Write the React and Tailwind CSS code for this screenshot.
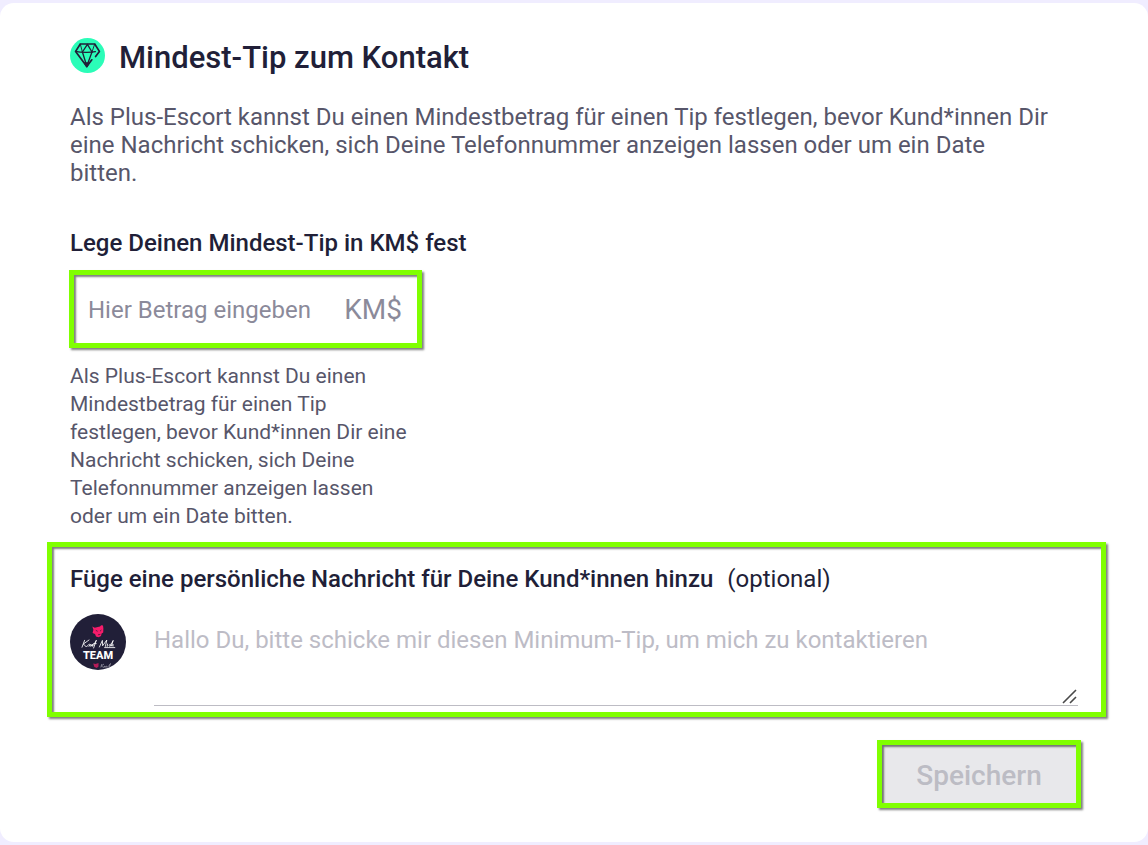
import React from "react";

const highlight =
  "border-[5px] border-[#80ff00] shadow-[2px_2px_2px_0_rgba(0,0,0,0.5),inset_2px_2px_2px_0_rgba(0,0,0,0.5)]";

function DiamondBadge() {
  return (
    <svg viewBox="0 0 35 35" className="-mt-[5px] size-[35px] shrink-0" aria-hidden="true">
      <circle cx="17.5" cy="17.5" r="17.5" fill="#2bfdb8" />
      <g fill="none" stroke="#211f38" strokeWidth="1.7" strokeLinecap="round" strokeLinejoin="round">
        <path d="M25.6 18.6 29.4 13.4 24.7 6H10.3L5.6 13.4 16.8 28.6 21.8 21.8" />
        <path d="M5.6 13.4C11 14.6 21 14.6 25.4 13.6" strokeWidth="1.4" />
        <path d="M12.4 14 16.8 28 22 14" strokeWidth="1.3" />
        <path d="M12.4 14 17.4 6.4 22 14" strokeWidth="1.3" />
        <path d="M10.3 6 12.4 14M24.7 6 22 14" strokeWidth="0.9" />
        <path d="M14.8 25H18.8L16.8 28.6Z" fill="#211f38" />
      </g>
    </svg>
  );
}

function TeamAvatar() {
  return (
    <svg viewBox="0 0 56 56" className="size-14 shrink-0" role="img" aria-label="Kauf Mich Team">
      <defs>
        <clipPath id="avatar-clip">
          <circle cx="28" cy="28" r="28" />
        </clipPath>
      </defs>
      <g clipPath="url(#avatar-clip)">
        <rect width="56" height="56" fill="#211f38" />
        <path
          d="M22.3 12.6 24.8 13.8 27.8 13 30 12.6 31.2 11.2 33 11.6 33.4 14.5 33.2 18.5 31.6 19.5 31 22 28.5 23.2 26 22.4 25 20 22.6 19 23.4 15.8Z"
          fill="#f71c6b"
        />
        <path d="M25.8 16.3 27.6 17.3M31.4 16 30 17.2M28 20.8 30.4 20.4" stroke="#211f38" strokeWidth="0.7" />
        <g fill="none" stroke="#fff" strokeWidth="0.85" strokeLinecap="round" strokeLinejoin="round">
          <path d="M14.6 26.3 12 33.2M19 26 13.4 30 16.4 33 18 31.2C19.4 29.4 20.4 29.8 19 32.4L21 30.2 20.8 32.4 22.6 30.2 22.4 32.4 24.6 29.4 26.4 26.2 23.6 34M23.6 29.6H26.2" />
          <path d="M29.4 33 32.4 26.4 32.6 31.8 36.8 26 35.4 32.4M37.6 30 37.2 32.4M40.4 30.2C38.8 30 38.4 32.6 40.2 32.2L43.2 26.4 41.4 32.2 43 30.4 43 32.2M34.6 33.6H44.8" />
        </g>
        <text
          x="28"
          y="45"
          textAnchor="middle"
          fill="#fff"
          className="font-[Roboto,sans-serif] text-[11px] font-extrabold"
        >
          TEAM
        </text>
        <path d="M23.2 49.5 25.5 50 28.5 49 28.5 52.5 26.8 54 24.4 53Z" fill="#b51c58" />
        <path
          d="M31.8 50 30.8 53.5M34 50 31.5 51.8 33 53.5 35 52 34.8 53.5 36.5 52 37 53.5 39 51.5 40.5 49.5 39 53.5"
          fill="none"
          stroke="#a3a2af"
          strokeWidth="0.7"
        />
      </g>
    </svg>
  );
}

export default function App() {
  return (
    <div className="bg-[#f0edff] py-[3px] font-[Roboto,sans-serif]">
      <form
        onSubmit={(event) => event.preventDefault()}
        className="rounded-[14px] bg-white pt-[35px] pr-[42px] pb-[34px] pl-[47px] text-[#211f38]"
      >
        <header className="pr-[53px] pl-[23px]">
          <div className="flex items-center gap-[14px]">
            <DiamondBadge />
            <h1 className="text-[31px] leading-10 font-medium">Mindest-Tip zum Kontakt</h1>
          </div>
          <p className="mt-[25px] text-2xl leading-7 text-[#57566a]">
            Als Plus-Escort kannst Du einen Mindestbetrag für einen Tip festlegen, bevor Kund*innen Dir eine
            Nachricht schicken, sich Deine Telefonnummer anzeigen lassen oder um ein Date bitten.
          </p>
        </header>

        <section className="mt-[42px] pl-[22px]">
          <label htmlFor="amount" className="block pl-px text-2xl leading-7 font-medium">
            Lege Deinen Mindest-Tip in KM$ fest
          </label>
          <div className={`mt-[13px] flex h-[78px] w-[353px] items-center pt-[2px] pr-[15px] pl-[14px] ${highlight}`}>
            <input
              id="amount"
              type="text"
              inputMode="numeric"
              placeholder="Hier Betrag eingeben"
              className="min-w-0 flex-1 bg-transparent text-2xl leading-7 outline-none placeholder:text-[#8b8a9a]"
            />
            <span className="text-[28px] leading-8 text-[#8b8a9a]">KM$</span>
          </div>
          <p className="mt-[14px] w-[350px] pl-px text-[21px] leading-7 text-[#57566a]">
            Als Plus-Escort kannst Du einen Mindestbetrag für einen Tip festlegen, bevor Kund*innen Dir eine
            Nachricht schicken, sich Deine Telefonnummer anzeigen lassen oder um ein Date bitten.
          </p>
        </section>

        <section className={`mt-3 pt-[18px] pr-[23px] pb-[6px] pl-[18px] ${highlight}`}>
          <label htmlFor="message" className="block text-2xl leading-7 font-medium">
            Füge eine persönliche Nachricht für Deine Kund*innen hinzu
            <span className="ml-[14px] font-normal">(optional)</span>
          </label>
          <div className="mt-[21px] flex items-start gap-7">
            <TeamAvatar />
            <div className="relative flex flex-1">
              <textarea
                id="message"
                placeholder="Hallo Du, bitte schicke mir diesen Minimum-Tip, um mich zu kontaktieren"
                className="h-[92px] w-full resize-none border-b border-[#bdbcc4] bg-transparent pt-3 text-2xl leading-7 outline-none placeholder:text-[#bdbcc6]"
              />
              <svg
                viewBox="0 0 16 16"
                className="pointer-events-none absolute right-0 bottom-px size-4"
                aria-hidden="true"
              >
                <path d="M1 14 14 1M8 14 14 8" stroke="#4a4a4a" strokeWidth="1.6" />
              </svg>
            </div>
          </div>
        </section>

        <div className="mt-[23px] flex justify-end pr-[25px]">
          <button
            type="submit"
            disabled
            className={`h-[68px] w-[204px] bg-[#e8e8eb] pt-[3px] text-[28px] leading-8 font-medium text-[#bcbcc4] ${highlight}`}
          >
            Speichern
          </button>
        </div>
      </form>
    </div>
  );
}
